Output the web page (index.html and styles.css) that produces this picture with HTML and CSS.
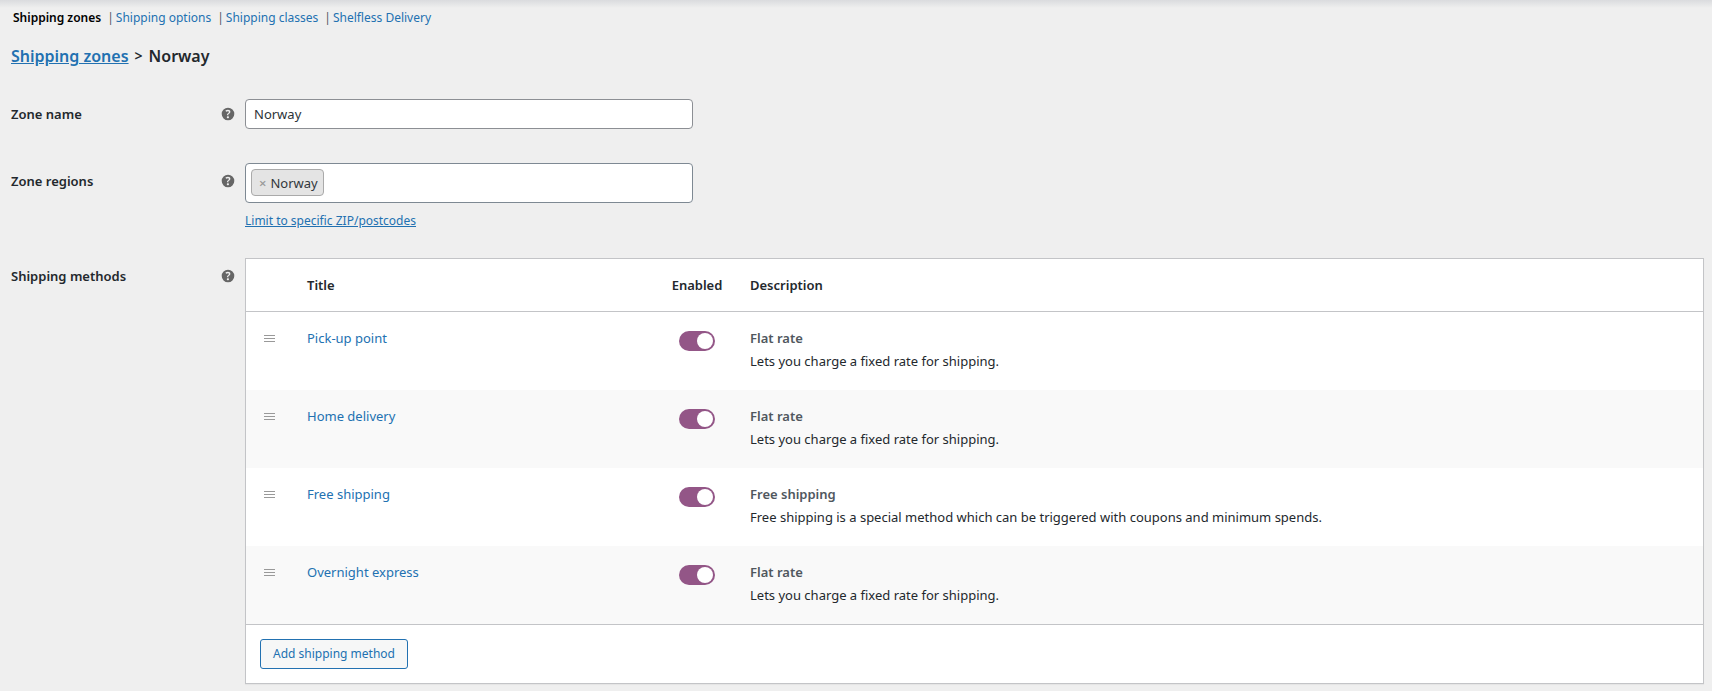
FILE: index.html
```
<!DOCTYPE html>
<html lang="en">
<head>
<meta charset="utf-8">
<title>Shipping zones – Norway</title>
<link rel="stylesheet" href="styles.css">
</head>
<body>
<svg class="sprite" aria-hidden="true">
  <symbol id="help" viewBox="0 0 20 20"><path fill-rule="evenodd" d="M17 10a7 7 0 1 0-14 0 7 7 0 0 0 14 0zm-6.200 1.300H8.900V11c0-.400.070-.750.240-1.030.160-.280.440-.580.860-.890.400-.290.670-.530.800-.710.130-.190.200-.390.200-.620 0-.260-.100-.450-.290-.590-.190-.130-.450-.200-.790-.200-.590 0-1.260.190-2.010.580L7.150 6c.880-.490 1.820-.740 2.800-.740.820 0 1.460.200 1.940.590.480.390.720.910.720 1.560 0 .440-.100.810-.300 1.130-.200.320-.580.670-1.140 1.070-.380.280-.620.490-.720.640-.100.150-.150.340-.150.580zm-2.100 2.430c0-.380.100-.660.300-.850.210-.190.500-.290.890-.290.370 0 .650.100.860.290.200.200.300.480.300.850 0 .350-.100.630-.310.830-.200.200-.490.300-.850.300-.380 0-.670-.100-.880-.290-.210-.200-.310-.480-.310-.840z"/></symbol>
  <symbol id="grip" viewBox="0 0 11 9"><path d="M0 1.500h11M0 4.500h11M0 7.500h11"/></symbol>
</svg>
<nav class="subnav">
  <a href="#" class="current">Shipping zones</a><span>|</span><a href="#">Shipping options</a><span>|</span><a href="#">Shipping classes</a><span>|</span><a href="#">Shelfless Delivery</a>
</nav>
<main class="settings">
  <h2 class="crumbs"><a href="#">Shipping zones</a><span class="sep">&gt;</span><span>Norway</span></h2>
  <div class="row">
    <div class="row-label"><label for="zone-name">Zone name</label><svg class="help"><use href="#help"/></svg></div>
    <input class="text-field" id="zone-name" type="text" value="Norway">
  </div>
  <div class="row">
    <div class="row-label"><label for="zone-regions">Zone regions</label><svg class="help"><use href="#help"/></svg></div>
    <div class="regions">
      <div class="multi">
        <span class="chip"><button type="button" aria-label="Remove Norway">×</button>Norway</span>
        <input id="zone-regions" type="text">
      </div>
      <a class="limit" href="#">Limit to specific ZIP/postcodes</a>
    </div>
  </div>
  <div class="row">
    <div class="row-label"><span>Shipping methods</span><svg class="help"><use href="#help"/></svg></div>
    <div class="panel">
      <table class="methods">
        <thead>
          <tr><th class="col-grip"></th><th class="col-title">Title</th><th class="col-enabled">Enabled</th><th>Description</th></tr>
        </thead>
        <tbody>
          <tr>
            <td class="col-grip"><svg class="grip"><use href="#grip"/></svg></td>
            <td><a href="#">Pick-up point</a></td>
            <td class="col-enabled"><input class="toggle" type="checkbox" checked aria-label="Enable Pick-up point"></td>
            <td><strong>Flat rate</strong><p>Lets you charge a fixed rate for shipping.</p></td>
          </tr>
          <tr>
            <td class="col-grip"><svg class="grip"><use href="#grip"/></svg></td>
            <td><a href="#">Home delivery</a></td>
            <td class="col-enabled"><input class="toggle" type="checkbox" checked aria-label="Enable Home delivery"></td>
            <td><strong>Flat rate</strong><p>Lets you charge a fixed rate for shipping.</p></td>
          </tr>
          <tr>
            <td class="col-grip"><svg class="grip"><use href="#grip"/></svg></td>
            <td><a href="#">Free shipping</a></td>
            <td class="col-enabled"><input class="toggle" type="checkbox" checked aria-label="Enable Free shipping"></td>
            <td><strong>Free shipping</strong><p>Free shipping is a special method which can be triggered with coupons and minimum spends.</p></td>
          </tr>
          <tr>
            <td class="col-grip"><svg class="grip"><use href="#grip"/></svg></td>
            <td><a href="#">Overnight express</a></td>
            <td class="col-enabled"><input class="toggle" type="checkbox" checked aria-label="Enable Overnight express"></td>
            <td><strong>Flat rate</strong><p>Lets you charge a fixed rate for shipping.</p></td>
          </tr>
        </tbody>
      </table>
      <div class="panel-foot"><button class="add" type="button">Add shipping method</button></div>
    </div>
  </div>
</main>
</body>
</html>
```
FILE: styles.css
```
* { box-sizing: border-box; }

body {
  margin: 0;
  background: #efefef linear-gradient(#dadbde, #efefef) no-repeat 0 0 / 100% 8px;
  color: #23282d;
  font: 13px/20px "Segoe UI", "Noto Sans", "Open Sans", sans-serif;
}

a { color: #2271b1; text-decoration: none; }

.sprite { position: absolute; width: 0; height: 0; }

.subnav {
  display: flex;
  padding: 8px 13px 0;
  font-size: 12px;
  line-height: 20px;
  color: #50575e;
}
.subnav span { padding: 0 2px 0 6px; }
.subnav .current { color: #000; font-weight: 600; }

.settings { padding: 16px 8px 7px 11px; }

.crumbs {
  display: flex;
  gap: 6px;
  margin: 0 0 31px;
  font-size: 16px;
  line-height: 24px;
  font-weight: 600;
}
.crumbs a { text-decoration: underline; }
.crumbs .sep { font-size: 14px; }

.row {
  display: grid;
  grid-template-columns: 234px minmax(0, 1fr);
}
.row + .row { margin-top: 34px; }
.row + .row:last-child { margin-top: 28px; }

.row-label {
  display: flex;
  justify-content: space-between;
  align-self: start;
  align-items: center;
  padding: 5px 8px 0 0;
  font-weight: 600;
}
.row + .row .row-label { padding-top: 8px; }

.help { width: 18px; height: 18px; fill: #666; }

.text-field {
  width: 448px;
  max-width: 100%;
  height: 30px;
  padding: 0 8px;
  border: 1px solid #8c8f94;
  border-radius: 4px;
  background: #fff;
  color: #2c3338;
  font: inherit;
}

.regions { display: grid; gap: 9px; justify-items: start; }

.multi {
  display: flex;
  align-items: center;
  width: 448px;
  max-width: 100%;
  height: 40px;
  padding: 0 5px 2px;
  border: 1px solid #7e8993;
  border-radius: 4px;
  background: #fff;
}
.multi input {
  flex: 1;
  min-width: 0;
  border: 0;
  outline: 0;
  background: none;
  font: inherit;
}

.chip {
  display: flex;
  align-items: center;
  height: 27px;
  padding: 2px 5px 0 7px;
  border: 1px solid #aaa;
  border-radius: 4px;
  background: #e4e4e4;
  color: #32373c;
}
.chip button {
  padding: 0;
  margin-right: 4px;
  border: 0;
  background: none;
  color: #999;
  font: inherit;
  font-weight: 600;
}

.limit { font-size: 12px; line-height: 18px; text-decoration: underline; }

.panel {
  border: 1px solid #c3c4c7;
  background: #fff;
  box-shadow: 0 1px 1px rgba(0, 0, 0, .04);
}

.methods {
  width: 100%;
  border-collapse: collapse;
  table-layout: fixed;
}
.methods th, .methods td {
  padding: 16px 14px;
  text-align: left;
  vertical-align: top;
}
.methods td { padding-bottom: 19px; }
.methods th { font-weight: 600; border-bottom: 1px solid #c3c4c7; }
.methods tbody tr:nth-child(even) { background: #f9f9f9; }
.methods .col-grip { width: 47px; padding-right: 0; padding-left: 18px; }
.methods .col-title { width: 365px; }
.methods .col-enabled { width: 78px; padding-right: 0; padding-left: 0; text-align: center; }
.methods strong { display: block; font-weight: 600; color: #50575e; }
.methods p { margin: 3px 0 0; }

.grip {
  display: block;
  width: 11px;
  height: 9px;
  margin-top: 6px;
  stroke: #999;
  stroke-width: 1;
}

.toggle {
  appearance: none;
  display: flex;
  justify-content: flex-start;
  width: 36px;
  height: 20px;
  margin: 3px auto 0;
  padding: 2px;
  border-radius: 10px;
  background: #935687;
}
.toggle:checked { justify-content: flex-end; }
.toggle::before {
  content: "";
  width: 16px;
  height: 16px;
  border-radius: 50%;
  background: #fff;
}

.panel-foot { padding: 14px; border-top: 1px solid #c3c4c7; }

.add {
  display: block;
  height: 30px;
  padding: 0 12px;
  border: 1px solid #2271b1;
  border-radius: 3px;
  background: #f6f7f7;
  color: #2271b1;
  font: inherit;
  font-size: 12px;
}
```
